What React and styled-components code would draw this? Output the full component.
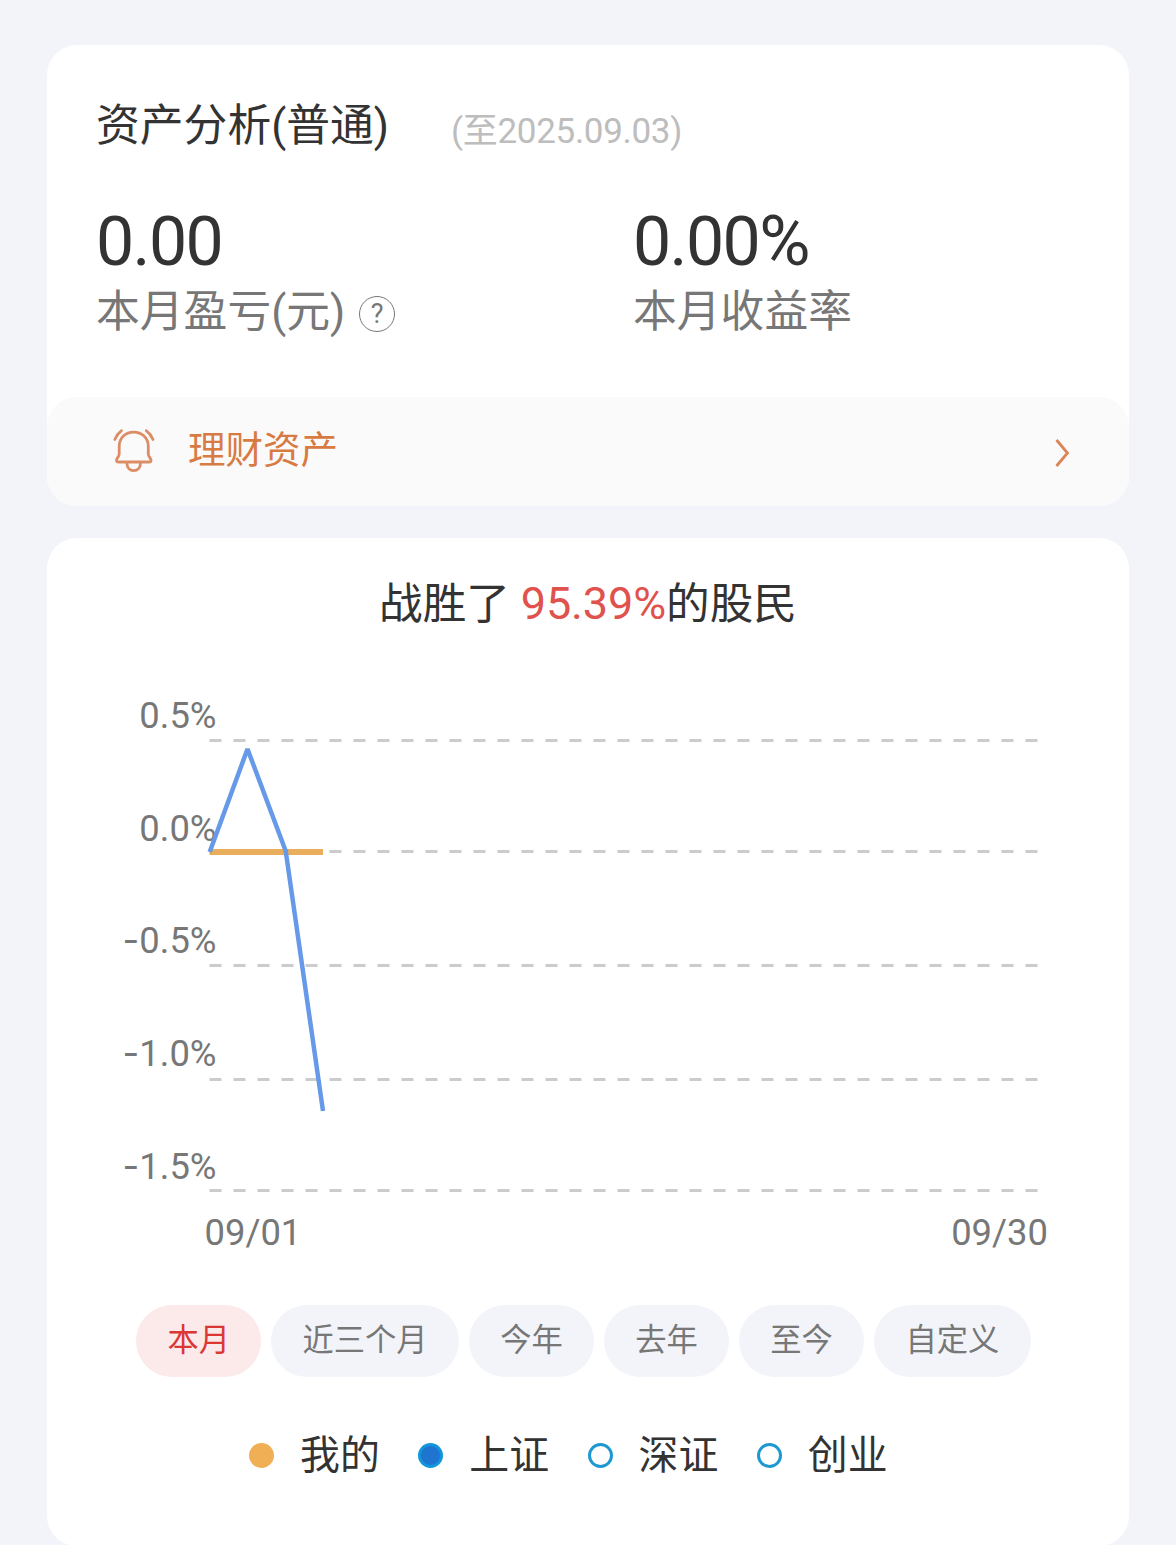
import React, { useState } from "react";
import styled, { createGlobalStyle } from "styled-components";

const GlobalStyle = createGlobalStyle`
  * {
    box-sizing: border-box;
  }
  body {
    margin: 0;
    background-color: #f3f4f9;
    font-family: Roboto, "Noto Sans CJK SC", sans-serif;
    color: #333333;
  }
`;

const Page = styled.main`
  width: 1176px;
  height: 1545px;
  padding: 45px 47px 0;
  display: flex;
  flex-direction: column;
  gap: 32px;
  overflow: hidden;
`;

const Card = styled.section`
  background-color: #ffffff;
  border-radius: 30px;
  height: ${(props) => props.$height}px;
  display: flex;
  flex-direction: column;
  flex-shrink: 0;
`;

const CardHeader = styled.header`
  display: flex;
  align-items: center;
  gap: 62px;
  padding: 49px 49px 0;
`;

const Title = styled.h1`
  margin: 0;
  font-size: 43.8px;
  font-weight: 400;
  line-height: 64px;
  white-space: nowrap;
`;

const AsOf = styled.span`
  margin-top: 11px;
  font-size: 35px;
  line-height: 50px;
  letter-spacing: -0.3px;
  color: #bdbdbd;
`;

const Stats = styled.div`
  display: grid;
  grid-template-columns: 537px 1fr;
  padding: 42px 0 0 49px;
  flex: 1;
`;

const StatValue = styled.div`
  font-size: 68px;
  line-height: 84px;
  letter-spacing: -1.6px;
`;

const Percent = styled.span`
  font-size: 70px;
  line-height: 1;
`;

const StatLabel = styled.div`
  display: flex;
  align-items: center;
  gap: 14px;
  margin-top: -2px;
  font-size: 43.8px;
  line-height: 60px;
  color: #777777;
`;

const HelpIcon = styled.span`
  width: 36px;
  height: 36px;
  margin-top: 3px;
  border: 1.5px solid #777777;
  border-radius: 50%;
  display: flex;
  align-items: center;
  justify-content: center;
  font-size: 27px;
  line-height: 32px;
`;

const Banner = styled.a`
  height: 109px;
  padding: 0 58px 0 65px;
  display: flex;
  align-items: center;
  border-radius: 30px;
  background-color: #fafafa;
  color: #d87b43;

  svg:first-child {
    margin-bottom: 4px;
  }
  svg:last-child {
    margin-top: 2px;
  }
`;

const BannerText = styled.span`
  flex: 1;
  padding-left: 32px;
  margin-bottom: 3px;
  font-size: 37.5px;
  line-height: 54px;
`;

const Headline = styled.h2`
  margin: 0;
  padding-top: 34px;
  font-size: 43.6px;
  font-weight: 400;
  line-height: 64px;
  text-align: center;
  white-space: pre;
`;

const Highlight = styled.span`
  font-size: 45px;
  letter-spacing: -0.1px;
  color: #e0524d;
`;

const ChartSvg = styled.svg`
  display: block;
  margin-top: 43px;
  flex-shrink: 0;

  text {
    font-size: 36.4px;
    fill: #777777;
  }
  .minus {
    font-family: Inter, sans-serif;
  }
`;

const Tabs = styled.div`
  display: flex;
  gap: 9.7px;
  padding: 45px 0 0 89px;
`;

const Tab = styled.button`
  height: 72px;
  padding: 0 31.4px 7px;
  border: none;
  border-radius: 36px;
  font-family: inherit;
  font-size: 31.3px;
  white-space: nowrap;
  cursor: pointer;
  background-color: ${(props) => (props.$active ? "#fce9ea" : "#f3f4f9")};
  color: ${(props) => (props.$active ? "#d93835" : "#777777")};
`;

const Legend = styled.div`
  display: flex;
  gap: 38.5px;
  padding: 49px 0 0 202px;
`;

const LegendItem = styled.div`
  display: flex;
  align-items: center;
  gap: 26px;
  font-size: 39.9px;
  line-height: 60px;
`;

const Dot = styled.span`
  width: 25px;
  height: 25px;
  margin-bottom: 1px;
  border-radius: 50%;
  border: 3px solid ${(props) => props.$border};
  background-color: ${(props) => props.$fill};
`;

const gridLines = [
  { label: "0.5%", y: 740.5, baseline: 728 },
  { label: "0.0%", y: 851.5, baseline: 841 },
  { label: "0.5%", negative: true, y: 965.5, baseline: 953 },
  { label: "1.0%", negative: true, y: 1079.5, baseline: 1066 },
  { label: "1.5%", negative: true, y: 1190.5, baseline: 1179 },
];

const periods = ["本月", "近三个月", "今年", "去年", "至今", "自定义"];

const series = [
  { name: "我的", border: "#f0ae55", fill: "#f0ae55" },
  { name: "上证", border: "#1296db", fill: "#1f74d0" },
  { name: "深证", border: "#1e98d0", fill: "#ffffff" },
  { name: "创业", border: "#1e98d0", fill: "#ffffff" },
];

const BellIcon = () => (
  <svg
    width="44"
    height="46"
    viewBox="0 0 44 46"
    fill="none"
    stroke="#dc8d66"
    strokeWidth="2.8"
    strokeLinecap="round"
    strokeLinejoin="round"
  >
    <path d="M7.2 27V19.5C7.2 11 13.5 5.1 21.7 5.1S36.3 11 36.3 19.5V27C36.3 30 39 31 39 33.2C39 34.5 38.3 35 37 35H6.5C5.2 35 4.5 34.5 4.5 33.2C4.5 31 7.2 30 7.2 27Z" />
    <path d="M15 36.5C15 41 18 43.6 21.7 43.6S28.4 41 28.4 36.5" />
    <path d="M2.8 12.5C4.5 8.5 6.5 6 9.5 3.7M34.2 3.7C37.5 6.2 39.5 8.8 41 12.5" />
  </svg>
);

const ChevronIcon = () => (
  <svg width="18" height="32" viewBox="0 0 18 32" fill="none">
    <path
      d="M3.5 3L14.5 16L3.5 29"
      stroke="#dc8455"
      strokeWidth="2.8"
    />
  </svg>
);

const ProfitChart = () => (
  <ChartSvg width="1082" height="580" viewBox="47 680 1082 580">
    {gridLines.map((line) => (
      <g key={line.y}>
        <line
          x1="209.5"
          x2="1038"
          y1={line.y}
          y2={line.y}
          stroke="#cccccc"
          strokeWidth="3"
          strokeDasharray="12 12"
        />
        <text x="216.5" y={line.baseline} textAnchor="end">
          {line.negative && <tspan className="minus">-</tspan>}
          {line.label}
        </text>
      </g>
    ))}
    <line x1="209.5" x2="323" y1="852" y2="852" stroke="#e9ae5b" strokeWidth="6" />
    <polyline
      points="209.7,852 247.5,749 285.7,851 323,1111"
      fill="none"
      stroke="#6699e8"
      strokeWidth="4.5"
      strokeLinejoin="bevel"
    />
    <text x="204.5" y="1245">
      09/01
    </text>
    <text x="1048" y="1245" textAnchor="end">
      09/30
    </text>
  </ChartSvg>
);

const App = () => {
  const [period, setPeriod] = useState("本月");

  return (
    <>
      <GlobalStyle />
      <Page>
        <Card $height={461}>
          <CardHeader>
            <Title>资产分析(普通)</Title>
            <AsOf>(至2025.09.03)</AsOf>
          </CardHeader>
          <Stats>
            <div>
              <StatValue>0.00</StatValue>
              <StatLabel>
                本月盈亏(元)
                <HelpIcon>?</HelpIcon>
              </StatLabel>
            </div>
            <div>
              <StatValue>
                0.00<Percent>%</Percent>
              </StatValue>
              <StatLabel>本月收益率</StatLabel>
            </div>
          </Stats>
          <Banner>
            <BellIcon />
            <BannerText>理财资产</BannerText>
            <ChevronIcon />
          </Banner>
        </Card>

        <Card $height={1008}>
          <Headline>
            战胜了 <Highlight>95.39%</Highlight>的股民
          </Headline>
          <ProfitChart />
          <Tabs>
            {periods.map((name) => (
              <Tab
                key={name}
                $active={name === period}
                onClick={() => setPeriod(name)}
              >
                {name}
              </Tab>
            ))}
          </Tabs>
          <Legend>
            {series.map((item) => (
              <LegendItem key={item.name}>
                <Dot $border={item.border} $fill={item.fill} />
                {item.name}
              </LegendItem>
            ))}
          </Legend>
        </Card>
      </Page>
    </>
  );
};

export default App;
